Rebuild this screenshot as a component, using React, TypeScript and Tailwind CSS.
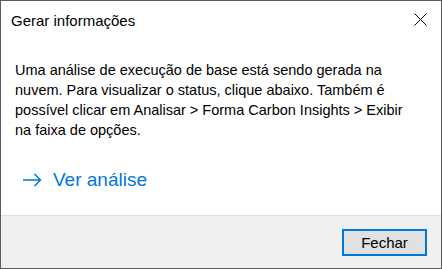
export default function App() {
  return (
    <div
      className="flex h-[269px] w-[442px] flex-col border border-[#5c5c5c] bg-white text-black"
      style={{ fontFamily: '"Liberation Sans", Arial, sans-serif' }}
    >
      {/* title bar */}
      <div className="flex h-[38px] items-start justify-between pl-[10px] pr-[14px] pt-[10px]">
        <span className="text-[15px] leading-[20px]">Gerar informações</span>
        <button className="mt-[2px] text-black" aria-label="Fechar">
          <svg width="13" height="13" viewBox="0 0 13 13" fill="none" stroke="currentColor" strokeWidth="1">
            <path d="M0.5 0.5l12 12M12.5 0.5l-12 12" />
          </svg>
        </button>
      </div>

      {/* body */}
      <div className="flex flex-1 flex-col pl-[14px] pt-[21px]">
        <p className="text-[14.5px] leading-[20px]">
          Uma análise de execução de base está sendo gerada na
          <br />
          nuvem. Para visualizar o status, clique abaixo. Também é
          <br />
          possível clicar em Analisar &gt; Forma Carbon Insights &gt; Exibir
          <br />
          na faixa de opções.
        </p>
        <a
          href="#"
          className="mt-[28px] ml-[8px] flex items-center gap-[11px] text-[19px] leading-[24px] text-[#0078d7]"
        >
          <svg width="19" height="14" viewBox="0 0 19 14" fill="none" stroke="currentColor" strokeWidth="1.5">
            <path d="M0 7h17.5M11.5 1l6 6-6 6" />
          </svg>
          <span>Ver análise</span>
        </a>
      </div>

      {/* footer */}
      <div className="flex h-[53px] items-start justify-end border-t border-[#dfdfdf] bg-[#f0f0f0] pr-[14px] pt-[13px]">
        <button className="h-[27px] w-[85px] border-2 border-[#0078d7] bg-[#e1e1e1] text-[15px] leading-[20px]">
          Fechar
        </button>
      </div>
    </div>
  );
}
